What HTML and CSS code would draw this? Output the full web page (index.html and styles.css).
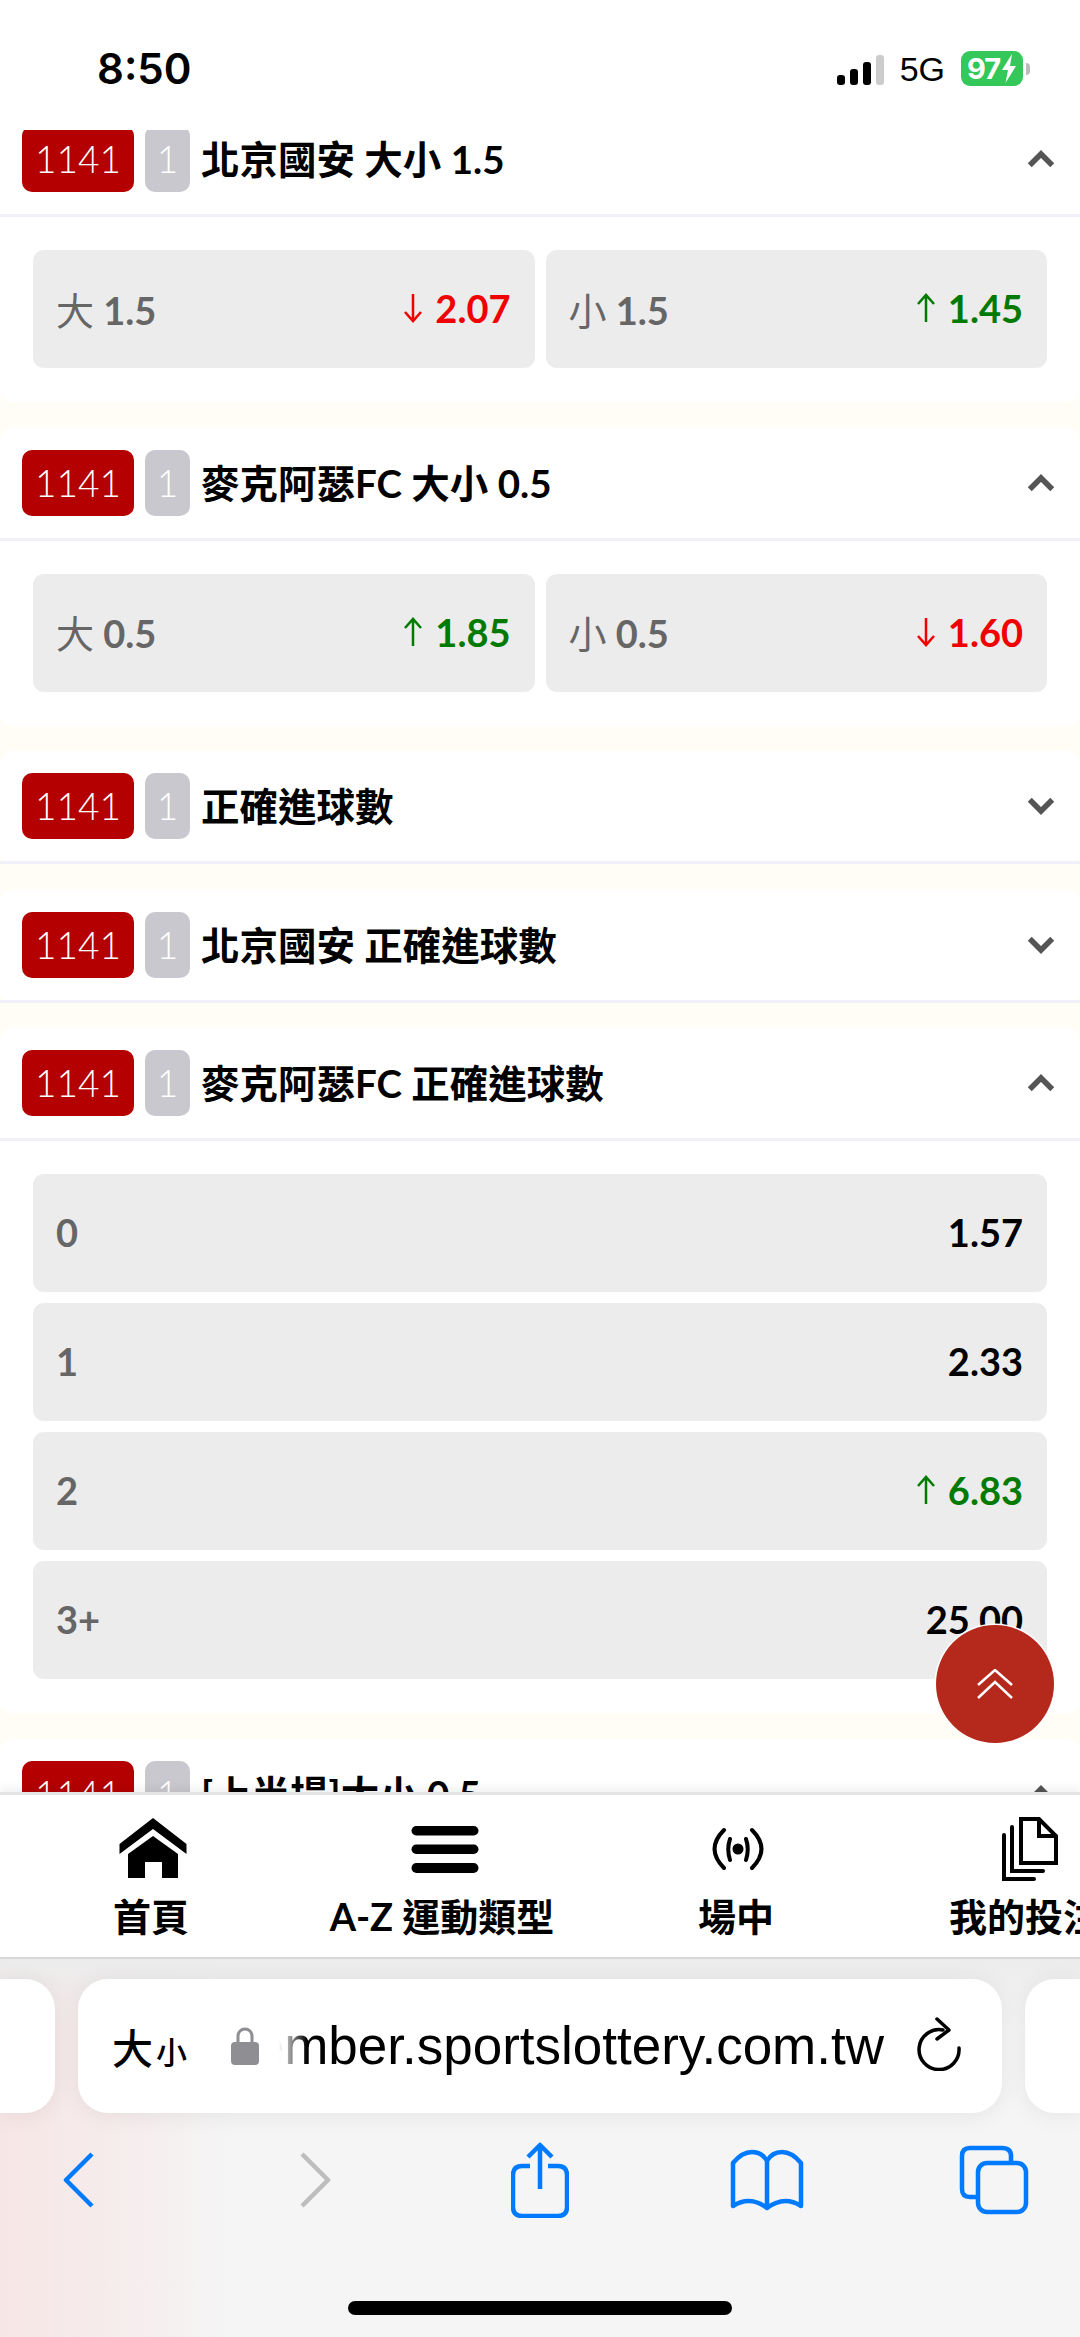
FILE: index.html
```html
<!DOCTYPE html>
<html lang="zh-Hant">
<head>
    <meta charset="UTF-8">
    <meta name="viewport" content="width=device-width, initial-scale=1.0">
    <title>大小</title>
    <link rel="stylesheet" href="styles.css">
</head>
<body>
<div class="phone">
    <!-- Status bar -->
    <div class="status-bar">
        <span class="clock">8:50</span>
        <div class="status-right">
            <div class="signal"><i class="b1"></i><i class="b2"></i><i class="b3"></i><i class="b4"></i></div>
            <span class="network">5G</span>
            <div class="battery">
                <span>97</span>
                <svg width="16" height="29" viewBox="0 0 16 29"><path d="M11 0 L1 16 H7 L4.500 29 L15 12 H9 Z" fill="#fff"/></svg>
            </div>
            <div class="battery-nub"></div>
        </div>
    </div>

    <!-- Markets list -->
    <div class="markets">
        <div class="market first">
            <div class="market-head">
                <span class="badge-red">1141</span><span class="badge-grey">1</span>
                <span class="market-title">北京國安 大小 1.5</span>
                <svg class="chevron" viewBox="0 0 24 16"><path d="M3 13 L12 4 L21 13"/></svg>
            </div>
            <div class="market-body two">
                <div class="option"><span class="opt-label"><span class="opt-cjk">大</span> 1.5</span><span class="odds down"><svg class="arrow" viewBox="0 0 20 30"><path d="M10 1 V28 M2 19 L10 28 L18 19"/></svg>2.07</span></div>
                <div class="option"><span class="opt-label"><span class="opt-cjk">小</span> 1.5</span><span class="odds up"><svg class="arrow" viewBox="0 0 20 30"><path d="M10 29 V2 M2 11 L10 2 L18 11"/></svg>1.45</span></div>
            </div>
        </div>

        <div class="market">
            <div class="market-head">
                <span class="badge-red">1141</span><span class="badge-grey">1</span>
                <span class="market-title">麥克阿瑟FC 大小 0.5</span>
                <svg class="chevron" viewBox="0 0 24 16"><path d="M3 13 L12 4 L21 13"/></svg>
            </div>
            <div class="market-body two">
                <div class="option"><span class="opt-label"><span class="opt-cjk">大</span> 0.5</span><span class="odds up"><svg class="arrow" viewBox="0 0 20 30"><path d="M10 29 V2 M2 11 L10 2 L18 11"/></svg>1.85</span></div>
                <div class="option"><span class="opt-label"><span class="opt-cjk">小</span> 0.5</span><span class="odds down"><svg class="arrow" viewBox="0 0 20 30"><path d="M10 1 V28 M2 19 L10 28 L18 19"/></svg>1.60</span></div>
            </div>
        </div>

        <div class="market">
            <div class="market-head">
                <span class="badge-red">1141</span><span class="badge-grey">1</span>
                <span class="market-title">正確進球數</span>
                <svg class="chevron" viewBox="0 0 24 16"><path d="M3 3 L12 12 L21 3"/></svg>
            </div>
        </div>

        <div class="market">
            <div class="market-head">
                <span class="badge-red">1141</span><span class="badge-grey">1</span>
                <span class="market-title">北京國安 正確進球數</span>
                <svg class="chevron" viewBox="0 0 24 16"><path d="M3 3 L12 12 L21 3"/></svg>
            </div>
        </div>

        <div class="market">
            <div class="market-head">
                <span class="badge-red">1141</span><span class="badge-grey">1</span>
                <span class="market-title">麥克阿瑟FC 正確進球數</span>
                <svg class="chevron" viewBox="0 0 24 16"><path d="M3 13 L12 4 L21 13"/></svg>
            </div>
            <div class="market-body">
                <div class="option"><span class="opt-label">0</span><span class="odds">1.57</span></div>
                <div class="option"><span class="opt-label">1</span><span class="odds">2.33</span></div>
                <div class="option"><span class="opt-label">2</span><span class="odds up"><svg class="arrow" viewBox="0 0 20 30"><path d="M10 29 V2 M2 11 L10 2 L18 11"/></svg>6.83</span></div>
                <div class="option"><span class="opt-label">3+</span><span class="odds">25.00</span></div>
            </div>
        </div>

        <div class="market">
            <div class="market-head">
                <span class="badge-red">1141</span><span class="badge-grey">1</span>
                <span class="market-title">[上半場]大小 0.5</span>
                <svg class="chevron" viewBox="0 0 24 16"><path d="M3 13 L12 4 L21 13"/></svg>
            </div>
        </div>
    </div>

    <!-- Back to top button -->
    <div class="to-top">
        <svg width="36" height="30" viewBox="0 0 36 30"><path d="M1 16 L18 1 L35 16 M1 29 L18 13 L35 29"/></svg>
    </div>

    <!-- Bottom tabs -->
    <div class="tabbar">
        <div class="tab tab-home">
            <svg class="tab-icon" width="68" height="66" viewBox="0 0 68 66"><path d="M34 2 L67.500 28 V38 L34 13 L0.500 38 V28 Z"/><path d="M34 20 L59 38 V62 H43 V46 H26 V62 H9 V38 Z"/></svg>
            <span>首頁</span>
        </div>
        <div class="tab tab-sports">
            <svg class="tab-icon" width="68" height="66" viewBox="0 0 68 66"><rect x="0.500" y="10" width="67" height="9.500" rx="4.700"/><rect x="0.500" y="28.500" width="67" height="9.500" rx="4.700"/><rect x="0.500" y="47" width="67" height="10" rx="5"/></svg>
            <span>A-Z 運動類型</span>
        </div>
        <div class="tab tab-live">
            <svg class="tab-icon line" width="68" height="66" viewBox="0 0 68 66"><circle cx="34" cy="33" r="3.500" fill="#000"/><path d="M26 23 Q22.500 33 26 44 M42 23 Q45.500 33 42 44 M20 14 Q1 33 20 52 M48 14 Q67 33 48 52"/></svg>
            <span>場中</span>
        </div>
        <div class="tab tab-bets">
            <svg class="tab-icon line" width="68" height="66" viewBox="0 0 68 66"><path d="M26 3 H44 L61 20 V47 H26 Z M44 3 V20 H61"/><path d="M17 11 V55 H48 M9 19 V63 H39"/></svg>
            <span>我的投注</span>
        </div>
    </div>

    <!-- Browser toolbar -->
    <div class="browser">
        <div class="url-row">
            <div class="tab-peek left"></div>
            <div class="url-bar">
                <span class="url-aa">大<small>小</small></span>
                <svg class="lock" width="28" height="38" viewBox="0 0 28 38"><path d="M7 17 V9 A7 7 0 0 1 21 9 V17" fill="none" stroke="#8e8e93" stroke-width="3"/><rect x="0" y="15" width="28" height="23" rx="4" fill="#8e8e93"/></svg>
                <div class="url-clip"><span class="url-text">member.sportslottery.com.tw</span></div>
                <svg class="reload" width="46" height="54" viewBox="0 0 46 54"><path d="M27 13 A20 20 0 1 0 43 31" fill="none" stroke="#000" stroke-width="3.500" stroke-linecap="round"/><path d="M21 2 L33 13 L21 22" fill="none" stroke="#000" stroke-width="3.500" stroke-linecap="round" stroke-linejoin="round"/></svg>
            </div>
            <div class="tab-peek right"></div>
        </div>
        <div class="browser-tools">
            <svg width="32" height="56" viewBox="0 0 32 56"><path d="M29 2 L3 28 L29 54" class="tool-blue"/></svg>
            <svg width="32" height="56" viewBox="0 0 32 56"><path d="M3 2 L29 28 L3 54" class="tool-grey"/></svg>
            <svg width="58" height="76" viewBox="0 0 58 76"><path d="M19 24 H11 Q2 24 2 33 V65 Q2 74 11 74 H47 Q56 74 56 65 V33 Q56 24 47 24 H37 M29 47 V3 M17 15 L29 3 L41 15" class="tool-blue"/></svg>
            <svg width="74" height="62" viewBox="0 0 74 62"><path d="M37 59 Q20 46 3 57 V14 Q12 3 22 3 Q32 3 37 12 Q42 3 52 3 Q62 3 71 14 V57 Q54 46 37 59 Z M37 12 V59" class="tool-blue"/></svg>
            <svg width="70" height="70" viewBox="0 0 70 70"><path d="M18 52 H11 Q3 52 3 44 V11 Q3 3 11 3 H43 Q52 3 52 11 V17" class="tool-blue"/><rect x="19" y="18" width="48" height="49" rx="9" class="tool-blue"/></svg>
        </div>
        <div class="home-indicator"></div>
    </div>
</div>
</body>
</html>
```

FILE: styles.css
```css
/* General Page Styling */
body {
    margin: 0;
    background: #fff;
    font-family: 'Lato', 'Noto Sans CJK TC', sans-serif;
}

.phone {
    position: relative;
    width: 1080px;
    height: 2337px;
    overflow: hidden;
    display: flex;
    flex-direction: column;
}

/* Status bar */
.status-bar {
    height: 130px;
    flex: none;
    display: flex;
    justify-content: space-between;
    align-items: flex-start;
    padding: 0 50px 0 97px;
    box-sizing: border-box;
    background: #fff;
    position: relative;
    z-index: 2;
}

.clock {
    font-family: 'Inter', sans-serif;
    font-size: 42px;
    font-weight: 600;
    line-height: 52px;
    margin-top: 43px;
}

.status-right {
    display: flex;
    align-items: center;
    margin-top: 51px;
    height: 35px;
}

.signal {
    display: flex;
    align-items: flex-end;
    gap: 5px;
    height: 30px;
    margin-top: 2px;
}

.signal i {
    display: block;
    width: 8px;
    border-radius: 3px;
    background: #000;
}

.signal .b1 { height: 10px; }
.signal .b2 { height: 16px; }
.signal .b3 { height: 23px; }
.signal .b4 { height: 30px; background: #ccc; }

.network {
    font-family: 'Liberation Sans', sans-serif;
    font-size: 34px;
    margin: 2px 16px 0 16px;
}

.battery {
    width: 62px;
    height: 35px;
    border-radius: 9px;
    background: #34c759;
    display: flex;
    align-items: center;
    justify-content: center;
    gap: 1px;
    color: #fff;
    font-family: 'Inter', sans-serif;
    font-size: 29px;
    font-weight: 700;
    letter-spacing: -1px;
}

.battery-nub {
    width: 4px;
    height: 12px;
    margin-left: 3px;
    background: #bbb;
    border-radius: 0 4px 4px 0;
}

/* Markets */
.markets {
    flex: 1;
    min-height: 0;
    overflow: hidden;
    background: #fffdf5;
}

.market {
    background: #fff;
    border-radius: 12px;
    margin-bottom: 25.500px;
}

.market.first {
    margin-top: -26px;
}

.market-head {
    display: flex;
    align-items: center;
    height: 110px;
    padding: 0 24px 0 22px;
    border-bottom: 3px solid #f0f0f8;
}

.badge-red, .badge-grey {
    height: 66px;
    line-height: 66px;
    text-align: center;
    color: #fff;
    font-size: 37px;
    font-weight: 300;
    border-radius: 10px;
}

.badge-red {
    width: 112px;
    background: #b40000;
}

.badge-grey {
    width: 45px;
    margin-left: 11px;
    background: #c8c8ce;
}

.market-title {
    flex: 1;
    margin-left: 11px;
    margin-top: -4px;
    font-size: 38.500px;
    font-weight: 700;
    color: #000;
}

.chevron {
    width: 30px;
    height: 20px;
    fill: none;
    stroke: #555;
    stroke-width: 4.500;
}

.market-body {
    display: flex;
    flex-direction: column;
    gap: 11px;
    padding: 33px 33px 34px;
}

.market-body.two {
    flex-direction: row;
}

.option {
    flex: 1;
    height: 118px;
    box-sizing: border-box;
    padding: 0 24px 0 23px;
    display: flex;
    justify-content: space-between;
    align-items: center;
    background: #ececec;
    border-radius: 11px;
    font-size: 38px;
}

.market-body.two .option {
    min-width: 0;
}

.market-body:not(.two) .option {
    flex: none;
}

.opt-label {
    color: #666;
    font-weight: 700;
    margin-top: -2px;
}

.opt-cjk {
    font-weight: 400;
}

.odds {
    display: flex;
    align-items: center;
    font-weight: 700;
    color: #000;
    margin-top: -2px;
}

.odds.up { color: #007a00; }
.odds.down { color: #f00000; }

.arrow {
    width: 20px;
    height: 30px;
    margin-right: 12px;
    fill: none;
    stroke: currentColor;
    stroke-width: 2.500;
}

/* Back to top */
.to-top {
    position: absolute;
    left: 936px;
    top: 1625px;
    width: 118px;
    height: 118px;
    border-radius: 50%;
    background: #b5281c;
    box-shadow: 0 0 0 1.500px #fff;
    display: flex;
    align-items: center;
    justify-content: center;
    z-index: 3;
}

.to-top svg {
    fill: none;
    stroke: #fff;
    stroke-width: 2.500;
}

/* Bottom tabs */
.tabbar {
    flex: none;
    height: 162px;
    display: flex;
    background: #fff;
    border-top: 3px solid #e4e4e4;
    border-bottom: 2px solid #d8d8d8;
    box-shadow: 0 -5px 8px rgba(0, 0, 0, 0.05);
    overflow: hidden;
    position: relative;
}

.tab {
    flex: none;
    height: 162px;
    box-sizing: border-box;
    padding-top: 21px;
    display: flex;
    flex-direction: column;
    align-items: center;
    font-size: 38px;
    font-weight: 700;
    white-space: nowrap;
}

.tab-home { width: 302px; }
.tab-sports { width: 280px; }
.tab-live { width: 308px; }
.tab-bets { width: 270px; }

.tab-icon { flex: none; }
.tab-home .tab-icon { margin-left: 3px; }
.tab-sports .tab-icon { margin-left: 5px; }
.tab-live .tab-icon { margin-left: 4px; }
.tab-bets .tab-icon { margin-left: 8px; }

.tab span { margin-top: 12px; line-height: 44px; }

.line {
    fill: none;
    stroke: #000;
    stroke-width: 4;
    stroke-linecap: round;
}

/* Browser toolbar */
.browser {
    flex: none;
    height: 378px;
    position: relative;
    background:
        linear-gradient(180deg, #ececec 0, rgba(240, 240, 240, 0) 70px),
        linear-gradient(90deg, #f7e6e6 0, #f6ebeb 100px, #f5f5f5 230px);
}

.url-row {
    display: flex;
    gap: 23px;
    padding-top: 20px;
    height: 134px;
    justify-content: center;
}

.url-bar, .tab-peek {
    background: #fff;
    border-radius: 30px;
    box-shadow: 0 2px 24px rgba(0, 0, 0, 0.07);
}

.tab-peek { flex: 1; }
.tab-peek.left { border-radius: 0 30px 30px 0; }
.tab-peek.right { border-radius: 30px 0 0 30px; }

.url-bar {
    flex: none;
    width: 924px;
    box-sizing: border-box;
    padding-left: 34px;
    display: flex;
    align-items: center;
    position: relative;
}

.url-aa {
    width: 119px;
    flex: none;
    font-size: 41px;
    font-weight: 500;
}

.url-aa small { font-size: 31px; margin-left: 3px; }

.lock { flex: none; }

/* Long host name, start of it fades out behind the lock */
.url-clip {
    width: 619px;
    flex: none;
    margin-left: 6px;
    display: flex;
    justify-content: flex-end;
    overflow: hidden;
    -webkit-mask-image: linear-gradient(90deg, transparent 14px, #000 42px);
    mask-image: linear-gradient(90deg, transparent 14px, #000 42px);
}

.url-text {
    flex: none;
    font-family: 'Liberation Sans', sans-serif;
    font-size: 53px;
    line-height: 70px;
    white-space: nowrap;
}

.reload {
    position: absolute;
    left: 838px;
    top: 38px;
}

.browser-tools {
    display: flex;
    align-items: center;
    height: 76px;
    margin-top: 29px;
    padding-left: 63px;
}

.browser-tools svg { flex: none; }
.browser-tools svg:nth-child(2) { margin-left: 204px; }
.browser-tools svg:nth-child(3) { margin-left: 180px; }
.browser-tools svg:nth-child(4) { margin-left: 161px; }
.browser-tools svg:nth-child(5) { margin-left: 155px; }

.tool-blue, .tool-grey {
    fill: none;
    stroke-width: 4.500;
    stroke-linejoin: round;
}

.tool-blue { stroke: #007aff; }
.tool-grey { stroke: #bdbdbd; }

.home-indicator {
    position: absolute;
    left: 348px;
    bottom: 22px;
    width: 384px;
    height: 14px;
    border-radius: 7px;
    background: #000;
}
```
